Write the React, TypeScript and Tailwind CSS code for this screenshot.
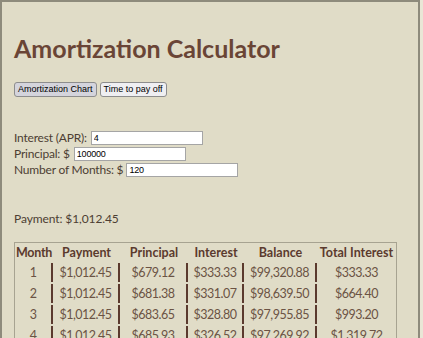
import { useState } from 'react';

interface Row {
  month: number;
  payment: string;
  principal: string;
  interest: string;
  balance: string;
  total: string;
}

const rows: Row[] = [
  { month: 1, payment: '$1,012.45', principal: '$679.12', interest: '$333.33', balance: '$99,320.88', total: '$333.33' },
  { month: 2, payment: '$1,012.45', principal: '$681.38', interest: '$331.07', balance: '$98,639.50', total: '$664.40' },
  { month: 3, payment: '$1,012.45', principal: '$683.65', interest: '$328.80', balance: '$97,955.85', total: '$993.20' },
  { month: 4, payment: '$1,012.45', principal: '$685.93', interest: '$326.52', balance: '$97,269.92', total: '$1,319.72' },
  { month: 5, payment: '$1,012.45', principal: '$688.22', interest: '$324.23', balance: '$96,581.70', total: '$1,643.95' },
];

const bar = 'border-r-2 border-[#5b3a2e]';
const inputCls =
  'h-[14px] w-[112px] border border-[#a5a5a5] bg-white px-[2px] text-[9px] text-black outline-none';
const sysFont = { fontFamily: '"Liberation Sans", Arial, sans-serif' };

const App = () => {
  const [interest, setInterest] = useState('4');
  const [principal, setPrincipal] = useState('100000');
  const [months, setMonths] = useState('120');

  return (
    <div className="h-[338px] w-[423px] overflow-hidden bg-[#e9e6d6]">
      <div
        className="h-[340px] w-[420px] border-l-2 border-t-2 border-r-2 border-[#8e8b7c] bg-[#e0dcc7] pl-[12px] pt-[30px] text-[#4d3e33]"
        style={{ fontFamily: 'Lato, "Open Sans", sans-serif' }}
      >
        <h1 className="text-[25px] leading-[32px] font-bold text-[#6a4536]">
          Amortization Calculator
        </h1>

        <div className="mt-[18px] flex gap-[3px]" style={sysFont}>
          <button className="h-[15px] rounded-[3px] border border-[#8d8d8d] bg-[#d4d4dc] px-[3px] text-[9px] leading-[13px] text-black">
            Amortization Chart
          </button>
          <button className="h-[15px] rounded-[3px] border border-[#8d8d8d] bg-[#efeff2] px-[3px] text-[9px] leading-[13px] text-black">
            Time to pay off
          </button>
        </div>

        <div className="mt-[33px] flex flex-col text-[12px] leading-[16px] tracking-[-0.2px]">
          <label className="flex items-center gap-[4px]">
            Interest (APR):
            <input value={interest} onChange={(e) => setInterest(e.target.value)} className={inputCls} style={sysFont} />
          </label>
          <label className="flex items-center gap-[4px]">
            Principal: $
            <input value={principal} onChange={(e) => setPrincipal(e.target.value)} className={inputCls} style={sysFont} />
          </label>
          <label className="flex items-center gap-[3px]">
            Number of Months: $
            <input value={months} onChange={(e) => setMonths(e.target.value)} className={inputCls} style={sysFont} />
          </label>
        </div>

        <p className="mt-[33px] text-[12px] leading-[16px] tracking-[-0.1px]">Payment: $1,012.45</p>

        <table className="mt-[15px] w-[383px] table-fixed border-separate border-spacing-x-0 border-spacing-y-[2px] border border-[#a7a391]">
          <colgroup>
            <col className="w-[38px]" />
            <col className="w-[67px]" />
            <col className="w-[68px]" />
            <col className="w-[56px]" />
            <col className="w-[73px]" />
            <col />
          </colgroup>
          <thead>
            <tr className="text-[12.5px] font-bold text-[#5b3a2e] leading-[16px]">
              <th className="tracking-[-0.3px]">Month</th>
              <th>Payment</th>
              <th>Principal</th>
              <th>Interest</th>
              <th>Balance</th>
              <th className="whitespace-nowrap">Total Interest</th>
            </tr>
          </thead>
          <tbody className="text-center text-[12.5px] tracking-[-0.5px] text-[#6b5344] leading-[19px]">
            {rows.map((r) => (
              <tr key={r.month}>
                <td className={bar}>{r.month}</td>
                <td className={bar}>{r.payment}</td>
                <td className={bar}>{r.principal}</td>
                <td className={bar}>{r.interest}</td>
                <td className={bar}>{r.balance}</td>
                <td>{r.total}</td>
              </tr>
            ))}
          </tbody>
        </table>
      </div>
    </div>
  );
};

export default App;
